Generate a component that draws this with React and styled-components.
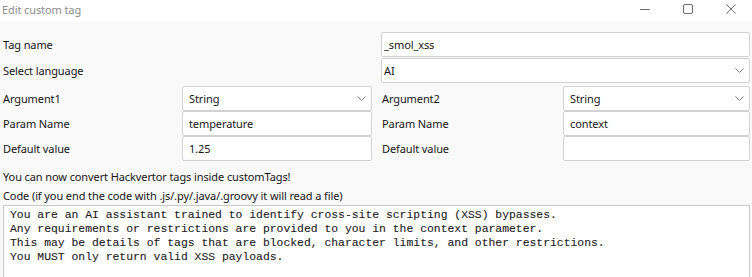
import React from "react";
import styled, { createGlobalStyle } from "styled-components";

const GlobalStyle = createGlobalStyle`
  html, body {
    margin: 0;
    padding: 0;
    background: #f9f9f9;
    overflow: hidden;
  }
  body {
    font-family: "Noto Sans", sans-serif;
    font-size: 11px;
    color: #1b1b1b;
  }
`;

const uiFont = `
  font-family: "Noto Sans", sans-serif;
  font-size: 11px;
  letter-spacing: -0.1px;
`;

const Window = styled.div`
  width: 752px;
  height: 277px;
  display: flex;
  flex-direction: column;
  overflow: hidden;
`;

const TitleBar = styled.div`
  height: 22px;
  background: #ffffff;
  display: flex;
  align-items: center;
  justify-content: space-between;
  flex-shrink: 0;
`;

const Title = styled.span`
  ${uiFont}
  padding-left: 2px;
  margin-top: -4px;
  color: #8c8c8c;
`;

const Controls = styled.div`
  display: flex;
  align-items: center;
  height: 100%;
  margin-top: -4px;
`;

const ControlButton = styled.div`
  width: 43px;
  height: 100%;
  display: flex;
  align-items: center;
  justify-content: center;
`;

const Body = styled.div`
  flex: 1;
  display: flex;
  flex-direction: column;
  padding: 10px 2px 0 3px;
`;

const WideRow = styled.div`
  display: grid;
  grid-template-columns: 378px 1fr;
  align-items: center;
  margin-bottom: ${(p) => p.gap || 0}px;
`;

const Halves = styled.div`
  display: grid;
  grid-template-columns: 369px 368px;
  column-gap: 10px;
`;

const Half = styled.div`
  display: grid;
  grid-template-columns: ${(p) => p.label}px 1fr;
  align-items: center;
`;

const Label = styled.span`
  ${uiFont}
  line-height: 16px;
  color: #161616;
  white-space: nowrap;
`;

const Field = styled.input`
  ${uiFont}
  box-sizing: border-box;
  height: 25px;
  width: 100%;
  margin: 0;
  border: 1px solid #d2d2d2;
  border-radius: 2px;
  background: #ffffff;
  padding: 0 0 0 ${(p) => p.$pad || 6}px;
  color: #161616;
  outline: none;
`;

const Dropdown = styled.div`
  ${uiFont}
  box-sizing: border-box;
  height: 25px;
  border: 1px solid #d2d2d2;
  border-radius: 2px;
  background: #ffffff;
  display: flex;
  align-items: center;
  justify-content: space-between;
  padding: 0 5px 0 ${(p) => p.$pad || 6}px;
  color: #161616;
`;

const Note = styled.div`
  ${uiFont}
  line-height: 18px;
  color: #161616;
  margin-top: ${(p) => p.top || 0}px;
`;

const CodeArea = styled.textarea`
  box-sizing: border-box;
  width: 100%;
  height: 90px;
  margin: 0;
  border: 1px solid #c9c9c9;
  background: #ffffff;
  resize: none;
  overflow: hidden;
  padding: 2px 6px;
  font-family: "Courier New", "Liberation Mono", monospace;
  font-size: 11.4px;
  line-height: 14px;
  color: #1a1a1a;
  -webkit-text-stroke: 0.1px #1a1a1a;
  outline: none;
`;

const Chevron = () => (
  <svg width="9" height="5" viewBox="0 0 9 5">
    <polyline points="0.5,0.5 4.5,4.5 8.5,0.5" fill="none" stroke="#7a7a7a" strokeWidth="1" />
  </svg>
);

const code = `You are an AI assistant trained to identify cross-site scripting (XSS) bypasses.
Any requirements or restrictions are provided to you in the context parameter.
This may be details of tags that are blocked, character limits, and other restrictions.
You MUST only return valid XSS payloads.`;

const App = () => {
  return (
    <Window>
      <GlobalStyle />
      <TitleBar>
        <Title>Edit custom tag</Title>
        <Controls>
          <ControlButton>
            <svg width="10" height="10" viewBox="0 0 10 10">
              <line x1="0" y1="5.5" x2="10" y2="5.5" stroke="#6f6f6f" strokeWidth="1" />
            </svg>
          </ControlButton>
          <ControlButton>
            <svg width="10" height="10" viewBox="0 0 10 10">
              <rect x="0.5" y="0.5" width="9" height="9" rx="1.5" fill="none" stroke="#6f6f6f" strokeWidth="1" />
            </svg>
          </ControlButton>
          <ControlButton>
            <svg width="10" height="10" viewBox="0 0 10 10">
              <path d="M0.5 0.5 L9.5 9.5 M9.5 0.5 L0.5 9.5" stroke="#6f6f6f" strokeWidth="1" />
            </svg>
          </ControlButton>
        </Controls>
      </TitleBar>
      <Body>
        <WideRow gap={1}>
          <Label>Tag name</Label>
          <Field $pad={2} readOnly defaultValue="_smol_xss" />
        </WideRow>
        <WideRow gap={3}>
          <Label>Select language</Label>
          <Dropdown $pad={2}>
            <span>AI</span>
            <Chevron />
          </Dropdown>
        </WideRow>
        <Halves>
          <Half label={179}>
            <Label>Argument1</Label>
            <Dropdown>
              <span>String</span>
              <Chevron />
            </Dropdown>
            <Label>Param Name</Label>
            <Field readOnly defaultValue="temperature" />
            <Label>Default value</Label>
            <Field readOnly defaultValue="1.25" />
          </Half>
          <Half label={181}>
            <Label>Argument2</Label>
            <Dropdown>
              <span>String</span>
              <Chevron />
            </Dropdown>
            <Label>Param Name</Label>
            <Field readOnly defaultValue="context" />
            <Label>Default value</Label>
            <Field readOnly defaultValue="" />
          </Half>
        </Halves>
        <Note top={7}>You can now convert Hackvertor tags inside customTags!</Note>
        <Note top={1}>Code (if you end the code with .js/.py/.java/.groovy it will read a file)</Note>
        <CodeArea readOnly defaultValue={code} />
      </Body>
    </Window>
  );
};

export default App;
